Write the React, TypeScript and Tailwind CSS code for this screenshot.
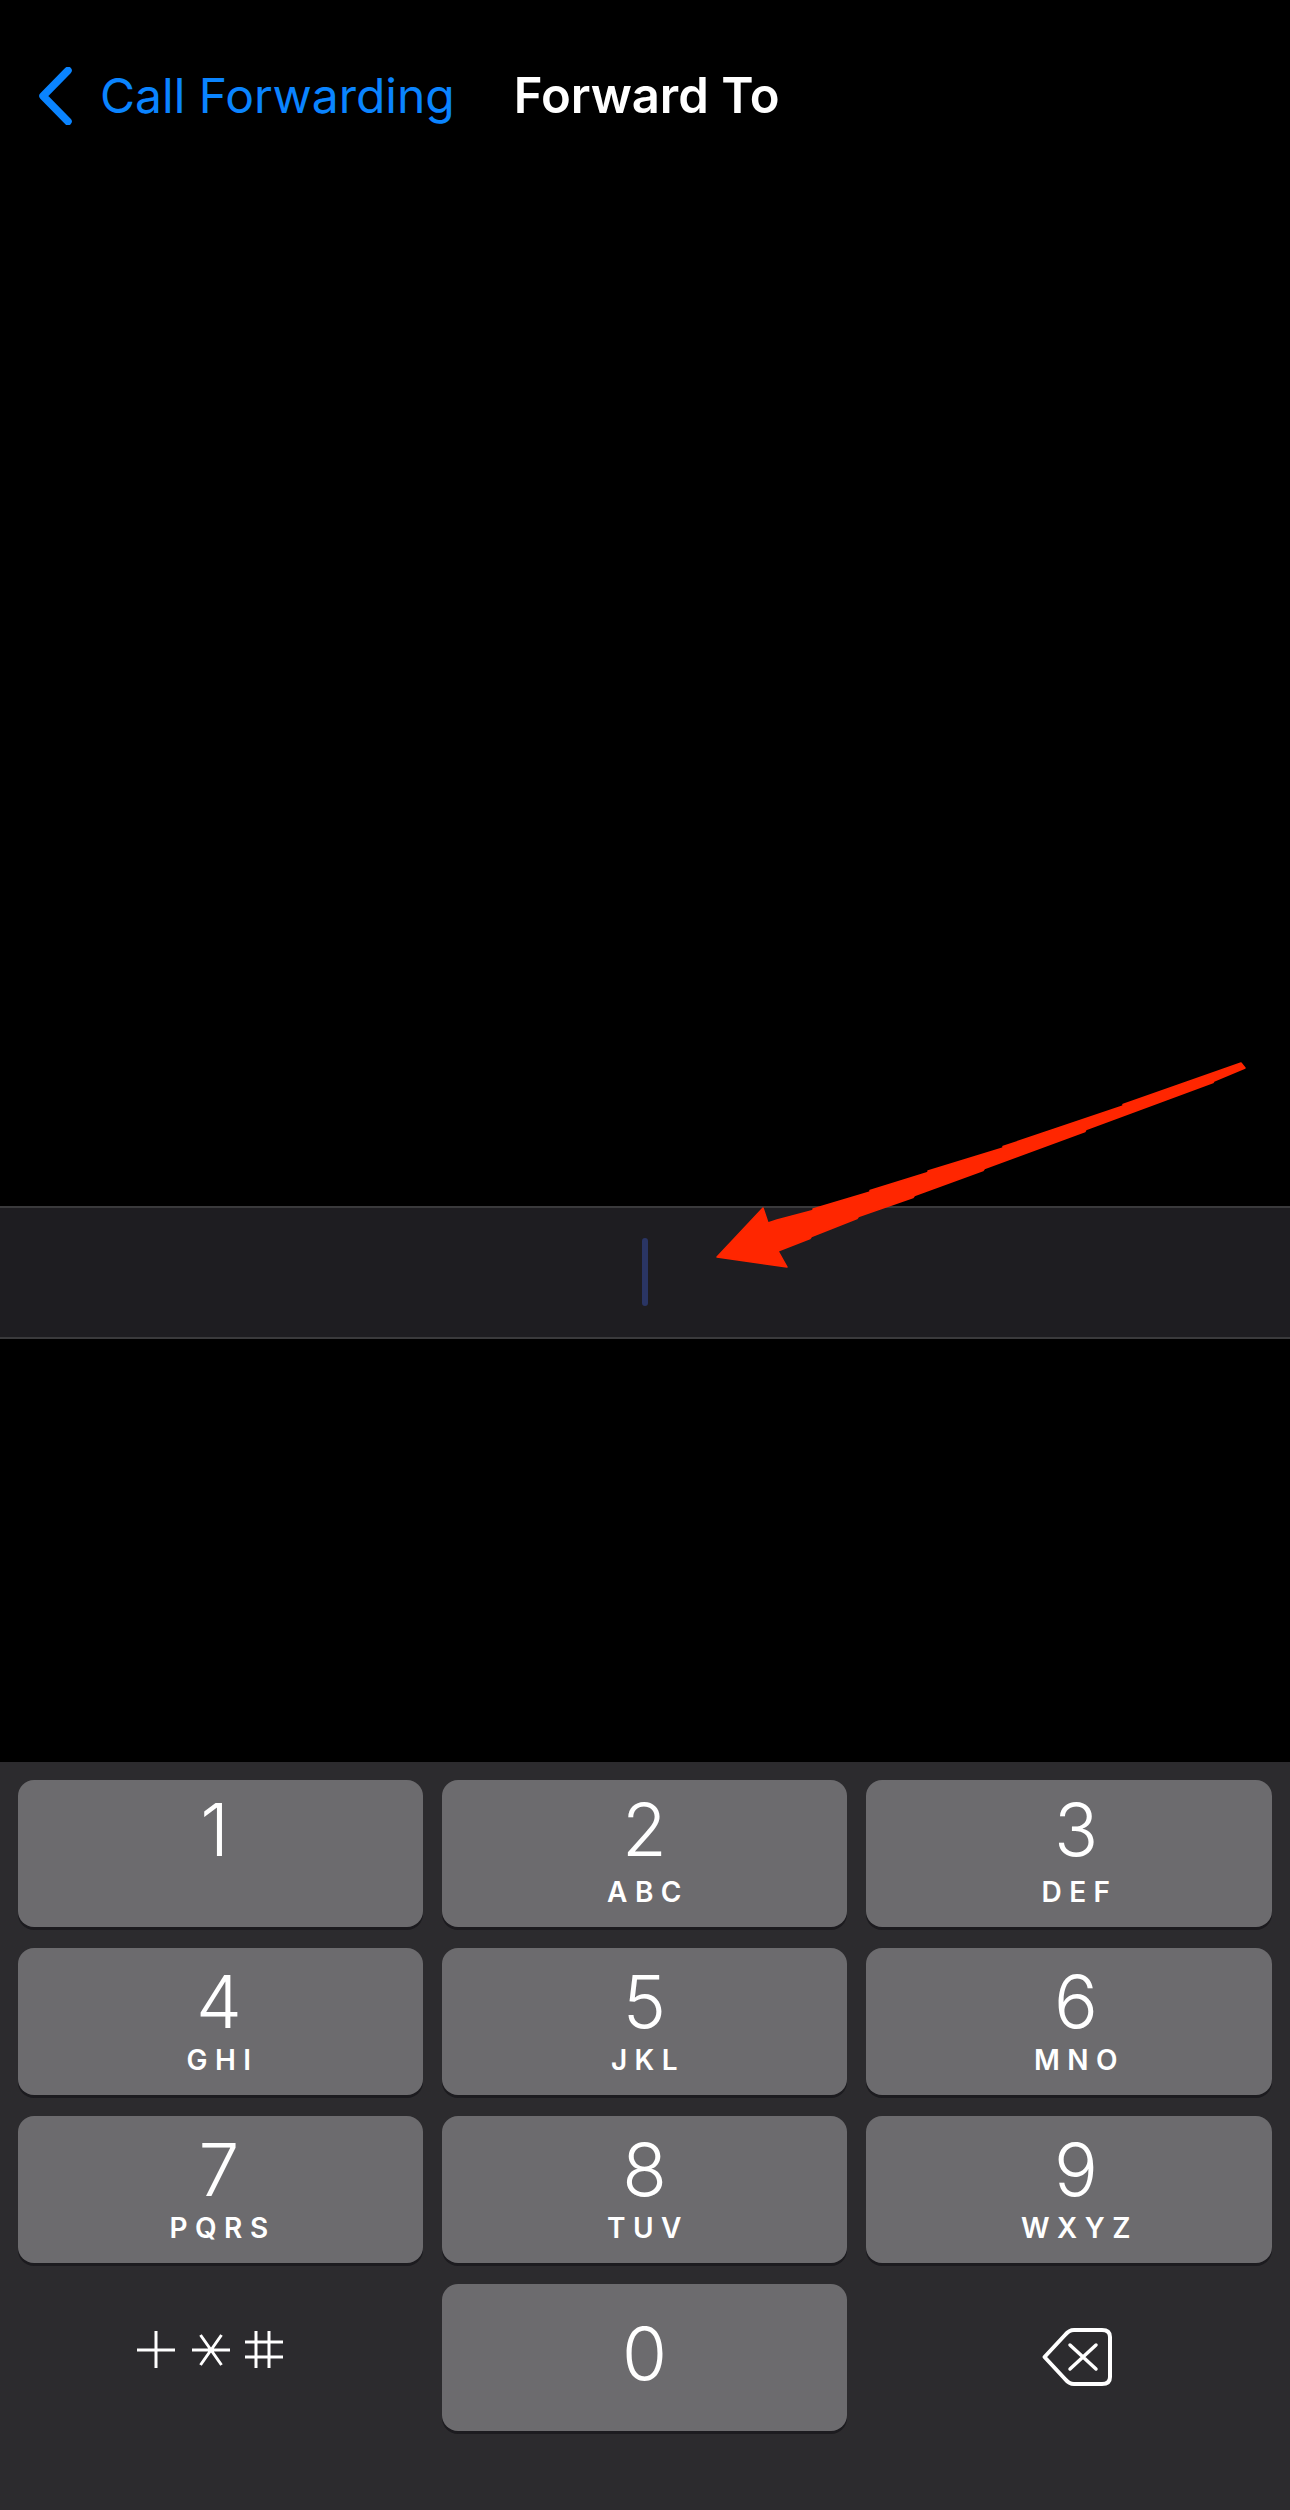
import React from 'react';

const keys = [
  { digit: '1', letters: '' },
  { digit: '2', letters: 'ABC' },
  { digit: '3', letters: 'DEF' },
  { digit: '4', letters: 'GHI' },
  { digit: '5', letters: 'JKL' },
  { digit: '6', letters: 'MNO' },
  { digit: '7', letters: 'PQRS' },
  { digit: '8', letters: 'TUV' },
  { digit: '9', letters: 'WXYZ' },
];

// the keyboard's labels don't sit dead centre in the outer columns
const columnClass = ['pr-[3px]', '', 'pl-[14px]'];

const Key: React.FC<{ digit: string; letters: string; index: number }> = ({ digit, letters, index }) => {
  const firstRow = index < 3;
  return (
    <div
      className={`h-[147px] rounded-[16px] bg-[#6c6b6e] shadow-[0_3px_0_#1c1b1f] flex flex-col items-center text-white ${
        firstRow ? 'pt-[13px]' : 'pt-[17px]'
      } ${columnClass[index % 3]}`}
    >
      <span className={`text-[73px] leading-[74px] font-light ${digit === '1' ? 'mr-[9px]' : ''}`}>{digit}</span>
      {letters && (
        <span
          className={`pl-[7px] text-[28px] leading-[30px] font-semibold tracking-[7.5px] ${
            firstRow ? 'mt-[10px]' : 'mt-[6px]'
          }`}
        >
          {letters}
        </span>
      )}
    </div>
  );
};

export default function App() {
  return (
    <div className="relative w-[1290px] h-[2510px] bg-black flex flex-col font-['Inter',sans-serif]">
      {/* Nav bar */}
      <header className="h-[192px] pl-[38px] flex items-center shrink-0">
        <svg width="34" height="58" viewBox="0 0 34 58" fill="none" className="mr-[28px]">
          <path d="M30 3.5 L5 29 L30 54.5" stroke="#0a84ff" strokeWidth="7.5" strokeLinecap="round" strokeLinejoin="round" />
        </svg>
        <span className="text-[48px] leading-[60px] text-[#0a84ff]">Call Forwarding</span>
        <span className="ml-[59px] text-[49px] leading-[60px] font-semibold text-white">Forward To</span>
      </header>

      <div className="h-[1014px] shrink-0" />

      {/* Number field */}
      <div className="h-[133px] shrink-0 bg-[#1e1d21] border-y-2 border-[#3a3a3c] flex items-center justify-center">
        <div className="w-[6px] h-[68px] rounded-full bg-[#2a3564] mt-[-2px] ml-[-1px]" />
      </div>

      <div className="h-[423px] shrink-0" />

      {/* Keypad */}
      <div className="flex-1 bg-[#2c2b2e] pt-[18px] px-[18px]">
        <div className="grid grid-cols-[405px_405px_406px] gap-x-[19px] gap-y-[21px]">
          {keys.map((k, i) => (
            <Key key={k.digit} digit={k.digit} letters={k.letters} index={i} />
          ))}
          <div className="h-[147px] flex items-center justify-center">
            <svg width="148" height="40" viewBox="0 0 148 40" fill="none" stroke="white" strokeWidth="3" aria-label="+*#" className="mb-[16px] mr-[20px]">
              <path d="M0 20 H38 M19 1 V38" />
              <path d="M55 20 H93 M63.5 5 L84.5 35 M84.5 5 L63.5 35" />
              <path d="M108 12 H146 M108 27 H146 M119 1 V38 M132 1 V38" />
            </svg>
          </div>
          <div className="h-[147px] pb-[8px] rounded-[16px] bg-[#6c6b6e] shadow-[0_3px_0_#1c1b1f] flex items-center justify-center text-white">
            <span className="text-[73px] leading-[74px] font-light">0</span>
          </div>
          <div className="h-[147px] flex items-center justify-center">
            <svg width="72" height="60" viewBox="0 0 72 60" fill="none" stroke="white" className="mb-[2px] ml-[16px]">
              <path d="M3.5 30 L24 8 Q28 3 33 3 H61 Q69 3 69 10 V50 Q69 57 61 57 H33 Q28 57 24 52 Z" strokeWidth="4" strokeLinejoin="round" />
              <path d="M29 18 L55 42 M55 18 L29 42" strokeWidth="3.5" strokeLinecap="round" />
            </svg>
          </div>
        </div>
      </div>

      {/* Red annotation arrow */}
      <svg className="absolute left-[700px] top-[1050px]" width="560" height="230" viewBox="700 1050 560 230" fill="#ff2600" stroke="#ff2600" strokeWidth="1.5" strokeLinejoin="round">
        <path d="M1241 1063 L1245 1068 L1214 1081 L1213 1082.5 L1086 1129.5 L1085 1131.5 L984.5 1168.5 L983 1170.5 L914.5 1195.5 L913 1197.5 L858.5 1216.5 L857 1218.5 L811.5 1236.5 L810 1238.5 L778 1251 L787 1267 L717 1257 L763 1208 L768 1223 L777 1220 L813 1210.5 L813 1209 L870 1192 L870 1190.5 L928 1172.5 L928 1171 L1003 1148 L1003 1146.5 L1123 1106 L1123 1104.5 Z" />
      </svg>
    </div>
  );
}
